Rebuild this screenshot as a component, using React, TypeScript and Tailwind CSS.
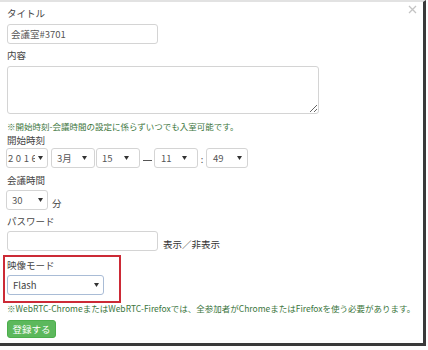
import React from "react";

const Arrow = ({ className = "" }: { className?: string }) => (
  <svg width="5" height="4" viewBox="0 0 5 4" className={className}>
    <path d="M0 0 L5 0 L2.5 4 Z" fill="#333" />
  </svg>
);

const Sel = ({
  text,
  w,
  pl,
  ar,
  tracking = "",
}: {
  text: string;
  w: string;
  pl: string;
  ar: string;
  tracking?: string;
}) => (
  <div className={`relative h-[20px] ${w} border border-[#d4d4d4] rounded-[3px] bg-white flex items-center overflow-hidden`}>
    <span className={`${pl} ${tracking} text-[9.5px] text-[#555] whitespace-nowrap`}>{text}</span>
    <div className={`absolute top-0 bottom-0 ${ar} flex items-center bg-white pl-[3px]`}>
      <Arrow />
    </div>
  </div>
);

export default function App() {
  return (
    <div
      className="w-[428px] h-[350px] bg-white overflow-hidden"
      style={{ fontFamily: '"Noto Sans CJK JP", "Noto Sans", sans-serif' }}
    >
      <div className="relative w-[426px] h-[346px] bg-white border-t-2 border-[#e2e2e2] border-r-[3px] border-b-[3px] border-r-[#3a3a3a] border-b-[#3a3a3a] pl-[7px]">
        <svg className="absolute right-[6px] top-[3px]" width="9" height="9" viewBox="0 0 9 9">
          <path d="M1 1 L8 8 M8 1 L1 8" stroke="#c4c4c4" strokeWidth="1.3" />
        </svg>

        <div className="pt-[4px] h-[18px] leading-[14px] text-[9.5px] text-[#444]">タイトル</div>
        <div className="mt-[4px] w-[151px] h-[20px] border border-[#d4d4d4] rounded-[3px] flex items-center pl-[3px] text-[9.5px] text-[#555]">
          会議室#3701
        </div>

        <div className="mt-[4px] h-[14px] leading-[14px] text-[9.5px] text-[#444]">内容</div>
        <textarea
          className="block mt-[4px] w-[312px] h-[48px] border border-[#d4d4d4] rounded-[3px] resize-y outline-none"
          defaultValue=""
        />

        <div className="mt-[5px] h-[14px] leading-[14px] text-[8.5px] text-[#3c763d] whitespace-nowrap">
          ※開始時刻-会議時間の設定に係らずいつでも入室可能です。
        </div>
        <div className="h-[14px] leading-[14px] text-[9.5px] text-[#444]">開始時刻</div>

        <div className="mt-[1px] flex items-center -ml-[1px]">
          <Sel text="2016" w="w-[42px]" pl="pl-[1px]" ar="right-[4px]" tracking="tracking-[2.6px]" />
          <div className="w-[3px]" />
          <Sel text="3月" w="w-[44px]" pl="pl-[5px]" ar="right-[7px]" />
          <div className="w-[1px]" />
          <Sel text="15" w="w-[44px]" pl="pl-[5px]" ar="right-[10px]" />
          <div className="w-[14px] flex justify-center items-center">
            <div className="w-[9px] h-[1px] bg-[#555] mt-[4px]" />
          </div>
          <Sel text="11" w="w-[44px]" pl="pl-[6px]" ar="right-[10px]" />
          <div className="w-[8px] text-[9px] text-[#555] flex justify-center pt-[4px]">:</div>
          <Sel text="49" w="w-[42px]" pl="pl-[6px]" ar="right-[5px]" />
        </div>

        <div className="mt-[5px] h-[14px] leading-[14px] text-[9.5px] text-[#444]">会議時間</div>
        <div className="mt-[3px] flex items-end -ml-[1px]">
          <Sel text="30" w="w-[42px]" pl="pl-[5px]" ar="right-[4px]" />
          <span className="ml-[4px] text-[9.5px] leading-[14px] text-[#444]">分</span>
        </div>

        <div className="mt-[4px] h-[14px] leading-[14px] text-[9.5px] text-[#444]">パスワード</div>
        <div className="mt-[3px] flex items-end">
          <div className="w-[151px] h-[20px] border border-[#d4d4d4] rounded-[3px]" />
          <span className="ml-[5px] text-[9.5px] leading-[13px] text-[#333]">表示／非表示</span>
        </div>

        <div className="mt-[4px] -ml-[4px] w-[118px] h-[48px] border-2 border-[#cc2a36] pl-[2px] pt-[1px]">
          <div className="h-[14px] leading-[14px] text-[9.5px] text-[#444]">映像モード</div>
          <div className="relative mt-[3px] w-[97px] h-[20px] border border-[#a9bcd6] rounded-[3px] flex items-center">
            <span className="pl-[5px] text-[9.5px] text-[#444]">Flash</span>
            <div className="absolute right-[4px] top-0 bottom-0 flex items-center">
              <Arrow />
            </div>
          </div>
        </div>

        <div className="h-[11px] leading-[11px] text-[8.5px] text-[#3c763d] whitespace-nowrap">
          ※WebRTC-ChromeまたはWebRTC-Firefoxでは、全参加者がChromeまたはFirefoxを使う必要があります。
        </div>

        <div className="mt-[6px] w-[49px] h-[18px] bg-[#5cb85c] border border-[#4cae4c] rounded-[3px] flex items-center justify-center text-[9.5px] text-white">
          登録する
        </div>
      </div>
    </div>
  );
}
